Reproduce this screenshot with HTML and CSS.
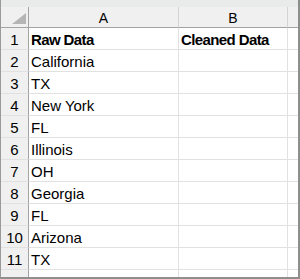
FILE: index.html
```html
<!DOCTYPE html>
<html lang="en">
<head>
    <meta charset="UTF-8">
    <title>Sheet</title>
    <link rel="stylesheet" href="styles.css">
</head>
<body>
    <div class="sheet">
        <div class="topbar"></div>

        <div class="row head">
            <div class="corner"><span class="tri"></span></div>
            <div class="col-head">A</div>
            <div class="col-head">B</div>
            <div class="col-head"></div>
        </div>

        <div class="row">
            <div class="num">1</div>
            <div class="cell bold">Raw Data</div>
            <div class="cell bold">Cleaned Data</div>
            <div class="cell"></div>
        </div>
        <div class="row">
            <div class="num">2</div>
            <div class="cell">California</div>
            <div class="cell"></div>
            <div class="cell"></div>
        </div>
        <div class="row">
            <div class="num">3</div>
            <div class="cell">TX</div>
            <div class="cell"></div>
            <div class="cell"></div>
        </div>
        <div class="row">
            <div class="num">4</div>
            <div class="cell">New York</div>
            <div class="cell"></div>
            <div class="cell"></div>
        </div>
        <div class="row">
            <div class="num">5</div>
            <div class="cell">FL</div>
            <div class="cell"></div>
            <div class="cell"></div>
        </div>
        <div class="row">
            <div class="num">6</div>
            <div class="cell">Illinois</div>
            <div class="cell"></div>
            <div class="cell"></div>
        </div>
        <div class="row">
            <div class="num">7</div>
            <div class="cell">OH</div>
            <div class="cell"></div>
            <div class="cell"></div>
        </div>
        <div class="row">
            <div class="num">8</div>
            <div class="cell">Georgia</div>
            <div class="cell"></div>
            <div class="cell"></div>
        </div>
        <div class="row">
            <div class="num">9</div>
            <div class="cell">FL</div>
            <div class="cell"></div>
            <div class="cell"></div>
        </div>
        <div class="row">
            <div class="num">10</div>
            <div class="cell">Arizona</div>
            <div class="cell"></div>
            <div class="cell"></div>
        </div>
        <div class="row">
            <div class="num">11</div>
            <div class="cell">TX</div>
            <div class="cell"></div>
            <div class="cell"></div>
        </div>
        <div class="row">
            <div class="num">12</div>
            <div class="cell"></div>
            <div class="cell"></div>
            <div class="cell"></div>
        </div>
    </div>
</body>
</html>
```

FILE: styles.css
```css
body {
    margin: 0;
    padding: 0;
    background-color: #fff;
    font-family: "Liberation Sans", Arial, sans-serif;
    color: #000;
}

.sheet {
    width: 300px;
    height: 279px;
    box-sizing: border-box;
    border-left: 1px solid #9a9a9a;
    border-right: 2px solid #8e8e8e;
    border-bottom: 2px solid #8e8e8e;
    overflow: hidden;
}

.topbar {
    height: 7px;
    background-color: #e8ebe9;
}

.row {
    display: grid;
    grid-template-columns: 28px 150px 109px 11px;
    height: 22px;
    box-sizing: border-box;
}

.row > div {
    box-sizing: border-box;
    border-right: 1px solid #e1e1e1;
    border-bottom: 1px solid #e1e1e1;
    overflow: hidden;
    white-space: nowrap;
}

.row.head {
    height: 21px;
    background-color: #f0f0f0;
}

.row.head > div {
    border-right-color: #d4d4d4;
    border-bottom-color: #a3a3a3;
}

.corner {
    position: relative;
}

.row.head > .corner,
.row > .num {
    border-right-color: #a3a3a3;
}

.tri {
    position: absolute;
    right: 2px;
    bottom: 3px;
    width: 0;
    height: 0;
    border-left: 14px solid transparent;
    border-bottom: 11px solid #b5b5b5;
}

.col-head {
    text-align: center;
    font-size: 14px;
    line-height: 20px;
    padding-top: 1px;
}

.num {
    background-color: #f0f0f0;
    text-align: center;
    font-size: 15px;
    line-height: 22px;
    padding-top: 1px;
}

.cell {
    font-size: 15px;
    line-height: 22px;
    padding-left: 2px;
    padding-top: 1px;
}

.bold {
    font-weight: bold;
    letter-spacing: -0.6px;
}
```
